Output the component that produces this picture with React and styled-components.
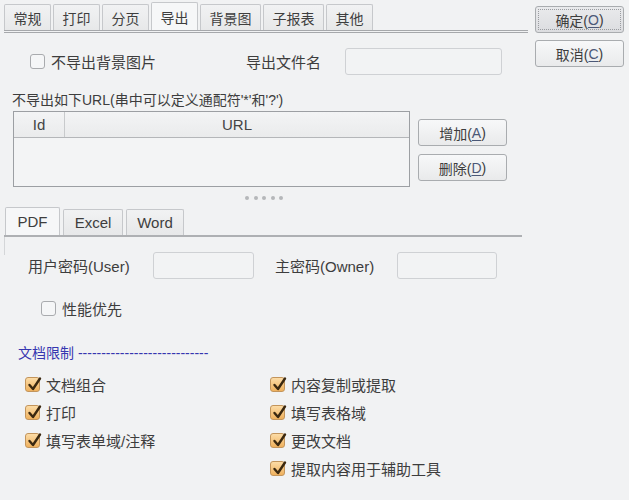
import * as React from "react"
import styled, { createGlobalStyle, css } from "styled-components"

const GlobalStyle = createGlobalStyle`
  body {
    margin: 0;
    padding: 0;
    background: #f1f2f3;
    font-family: "Liberation Sans", "Noto Sans CJK SC", sans-serif;
    color: #3d3d3d;
  }
`

const Window = styled.div`
  display: flex;
  width: 629px;
  height: 500px;
  padding: 3px 0 0 4px;
  box-sizing: border-box;
  overflow: hidden;
`

const Main = styled.div`
  width: 524px;
  display: flex;
  flex-direction: column;
`

const Side = styled.div`
  display: flex;
  flex-direction: column;
  gap: 7px;
  margin: 3px 0 0 7px;
`

const TabBar = styled.div`
  display: flex;
  gap: 2px;
  align-items: flex-end;
  height: 27px;
  border-bottom: 3px double #a6a8ab;
  ${p => p.$sub && css`
    border-bottom: 2px solid #aeb0b3;
    margin-right: 6px;
    gap: 3px;
    padding-left: 1px;
  `}
`

const Tab = styled.div`
  height: ${p => (p.$active ? "28px" : "26px")};
  padding: 0 8.5px;
  box-sizing: border-box;
  display: flex;
  align-items: center;
  font-size: ${p => (p.$wide ? 15 : 14)}px;
  color: #3e3e3e;
  border: 1px solid #c6c8cb;
  border-bottom: none;
  border-radius: 2px 2px 0 0;
  background: ${p => (p.$active ? "#f6f7f8" : "linear-gradient(#f1f2f3, #e7e8e9)")};
  ${p => p.$wide && css`
    min-width: ${p.$wide}px;
    justify-content: center;
  `}
`

const Row = styled.div`
  display: flex;
  align-items: center;
  margin-top: ${p => p.$mt || 0}px;
  padding-left: ${p => p.$pl || 0}px;
`

const Label = styled.span`
  font-size: 15px;
  color: #3d3d3d;
  white-space: nowrap;
  box-sizing: border-box;
  width: ${p => (p.$w ? `${p.$w}px` : "auto")};
  padding-left: ${p => p.$pl || 0}px;
  flex: none;
`

const Field = styled.div`
  width: ${p => p.$w}px;
  height: 27px;
  box-sizing: border-box;
  border: 1px solid #cfd1d4;
  border-radius: 3px;
  background: #f2f3f4;
  flex: none;
`

const CheckItem = styled.label`
  display: flex;
  align-items: center;
  gap: 6px;
  width: ${p => (p.$w ? `${p.$w}px` : "auto")};
  flex: none;
  height: ${p => p.$h || 16}px;
  font-size: 15px;
  color: #3d3d3d;
`

const Box = styled.span`
  position: relative;
  width: 15px;
  height: 15px;
  box-sizing: border-box;
  border-radius: 3px;
  flex: none;
  border: 1px solid ${p => (p.$on ? "#c3955c" : "#a9abae")};
  background: ${p => (p.$on ? "linear-gradient(#fcdca6, #efb15e)" : "#f5f6f7")};
  svg {
    position: absolute;
    left: 1px;
    top: -3px;
  }
`

const Caption = styled.div`
  font-size: 14px;
  line-height: 18px;
  margin: 16px 0 0 8px;
  color: #3d3d3d;
`

const UrlArea = styled.div`
  display: flex;
  margin: 2px 0 0 9px;
  gap: 8px;
`

const Table = styled.div`
  width: 397px;
  height: 76px;
  box-sizing: border-box;
  border: 1px solid #9c9fa3;
  background: #f3f4f5;
`

const HeadRow = styled.div`
  display: flex;
  height: 25px;
  border-bottom: 1px solid #b4b6b9;
  background: linear-gradient(#f3f4f5, #eaebec);
`

const HeadCell = styled.div`
  width: ${p => (p.$w ? `${p.$w}px` : "auto")};
  flex: ${p => (p.$w ? "none" : 1)};
  display: flex;
  align-items: center;
  justify-content: center;
  font-size: 15px;
  color: #444;
  border-right: ${p => (p.$w ? "1px solid #c8cacc" : "none")};
`

const ButtonCol = styled.div`
  display: flex;
  flex-direction: column;
  gap: 8px;
  padding-top: 8px;
`

const Button = styled.div`
  width: 89px;
  height: 27px;
  box-sizing: border-box;
  display: flex;
  align-items: center;
  justify-content: center;
  font-size: 14px;
  color: #3d3d3d;
  border: 1px solid #a9acaf;
  border-radius: 3px;
  background: linear-gradient(#f7f8f9, #e9eaeb);
  u {
    color: #4b5877;
    text-underline-offset: 2px;
  }
  ${p => p.$default && css`
    background: linear-gradient(#e9eaec, #dcdde0);
    outline: 1px dotted #9a9ca0;
    outline-offset: -4px;
  `}
`

const Dots = styled.div`
  display: flex;
  justify-content: center;
  gap: 4.5px;
  margin: 8px 0 0 0;
  padding-right: 4px;
  height: 6px;
  align-items: center;
  span {
    width: 4px;
    height: 4px;
    border-radius: 50%;
    background: #b5b7ba;
  }
`

const SubTabs = styled.div`
  margin-top: 7px;
  position: relative;
`

const PanelEdge = styled.div`
  position: absolute;
  left: 0;
  top: 29px;
  height: 18px;
  border-left: 1px solid #d4d6d8;
`

const Section = styled.div`
  margin: 26px 0 0 14px;
  height: 20px;
  display: flex;
  align-items: center;
  font-size: 14px;
  color: #3636b0;
  white-space: nowrap;
`

const Checks = styled.div`
  display: flex;
  margin: 8px 0 0 21px;
`

const CheckCol = styled.div`
  display: flex;
  flex-direction: column;
  width: ${p => p.$w || 245}px;
`

const Tick = () => (
  <svg width="15" height="17" viewBox="0 0 15 17">
    <path d="M2.5 10 L6 14 L13 3.5" fill="none" stroke="#3a2810" strokeWidth="2.4" strokeLinecap="round" strokeLinejoin="round" />
  </svg>
)

const Check = ({ on, children, w, h }) => (
  <CheckItem $w={w} $h={h}>
    <Box $on={on}>{on && <Tick />}</Box>
    {children}
  </CheckItem>
)

const App = () => {
  const tabs = ["常规", "打印", "分页", "导出", "背景图", "子报表", "其他"]
  const left = ["文档组合", "打印", "填写表单域/注释"]
  const right = ["内容复制或提取", "填写表格域", "更改文档", "提取内容用于辅助工具"]
  return (
    <Window>
      <GlobalStyle />
      <Main>
        <TabBar>
          {tabs.map(t => (
            <Tab key={t} $active={t === "导出"}>{t}</Tab>
          ))}
        </TabBar>

        <Row $mt={15} $pl={26}>
          <Check w={216}>不导出背景图片</Check>
          <Label $w={99}>导出文件名</Label>
          <Field $w={157} />
        </Row>

        <Caption>不导出如下URL(串中可以定义通配符'*'和'?')</Caption>
        <UrlArea>
          <Table>
            <HeadRow>
              <HeadCell $w={50}>Id</HeadCell>
              <HeadCell>URL</HeadCell>
            </HeadRow>
          </Table>
          <ButtonCol>
            <Button>增加(<u>A</u>)</Button>
            <Button>删除(<u>D</u>)</Button>
          </ButtonCol>
        </UrlArea>

        <Dots>
          <span /><span /><span /><span /><span />
        </Dots>

        <SubTabs>
          <TabBar $sub>
            <Tab $active $wide={55}>PDF</Tab>
            <Tab $wide={60}>Excel</Tab>
            <Tab $wide={58}>Word</Tab>
          </TabBar>
          <PanelEdge />
        </SubTabs>

        <Row $mt={15} $pl={24}>
          <Label $w={125}>用户密码(User)</Label>
          <Field $w={101} />
          <Label $w={143} $pl={21}>主密码(Owner)</Label>
          <Field $w={100} />
        </Row>

        <Row $mt={21} $pl={37}>
          <Check>性能优先</Check>
        </Row>

        <Section>文档限制 ----------------------------</Section>

        <Checks>
          <CheckCol>
            {left.map(t => (
              <Check key={t} on h={28}>{t}</Check>
            ))}
          </CheckCol>
          <CheckCol>
            {right.map(t => (
              <Check key={t} on h={28}>{t}</Check>
            ))}
          </CheckCol>
        </Checks>
      </Main>

      <Side>
        <Button $default>确定(<u>O</u>)</Button>
        <Button>取消(<u>C</u>)</Button>
      </Side>
    </Window>
  )
}

export default App
